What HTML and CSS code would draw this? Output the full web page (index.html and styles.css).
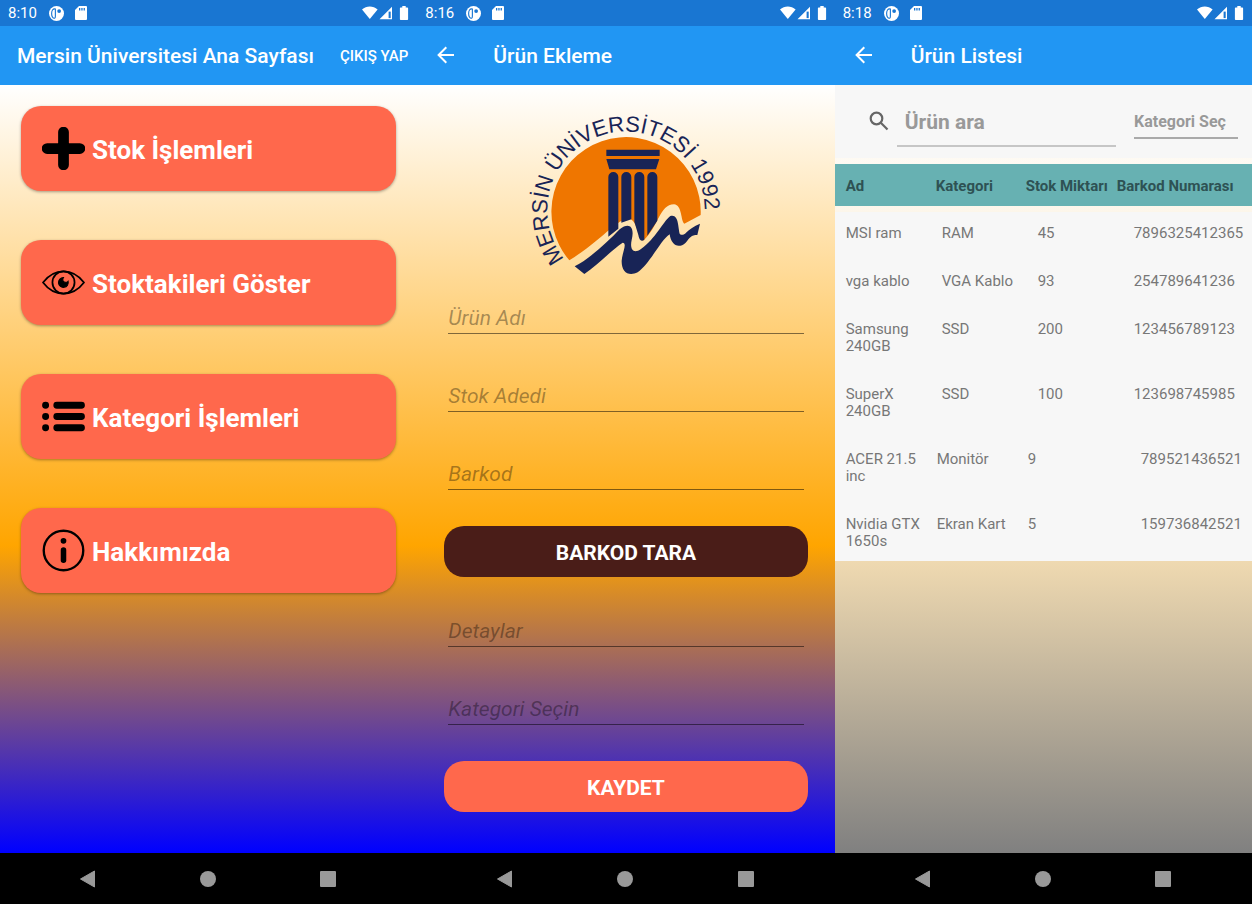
FILE: index.html
```html
<!DOCTYPE html>
<html lang="tr">
<head>
<meta charset="utf-8">
<title>Mersin Üniversitesi Stok</title>
<link rel="stylesheet" href="styles.css">
</head>
<body>
<svg class="defs" aria-hidden="true">
  <symbol id="app" viewBox="0 0 16 16"><circle cx="8" cy="8" r="8" fill="#fff"/><path d="M6.800 3.200C4 2.600 2.800 5 2.800 8S4 13.400 6 13.100C6.700 12.900 6.800 12.200 6.800 11z" fill="none" stroke="#1976d2" stroke-width="1.200"/><circle cx="10.800" cy="5.400" r="2" fill="#1976d2"/></symbol>
  <symbol id="sd" viewBox="0 0 12 14"><path d="M4 0h7a1 1 0 0 1 1 1v12a1 1 0 0 1-1 1H1a1 1 0 0 1-1-1V4z" fill="#fff"/><path d="M4 2h1.300v2.500H4zM6.300 2h1.300v2.500H6.300zM8.600 2h1.300v2.500H8.600z" fill="#1976d2"/></symbol>
  <symbol id="signals" viewBox="0 0 48 14"><path d="M1 3.500C5.400-.5 12.200-.5 16.600 3.500L8.800 13z" fill="#fff"/><path d="M18.500 13.300 31 .800v12.500z" fill="#fff"/><path d="M27.600 5.600h2.100v6.500h-2.100z" fill="#1976d2"/><path d="M41.300 0h3.400v1.400h1.600a.8.8 0 0 1 .8.8v11a.8.8 0 0 1-.8.800h-6.600a.8.8 0 0 1-.8-.8v-11a.8.8 0 0 1 .8-.8h1.600z" fill="#fff"/></symbol>
  <symbol id="back" viewBox="0 0 18 18"><path d="M17 9H2M9.300 1.300 1.600 9l7.700 7.700" fill="none" stroke="#fff" stroke-width="2"/></symbol>
  <symbol id="nav-back" viewBox="0 0 18 18"><path d="M15.500 1v16L1.500 9z" fill="#999" stroke="#999" stroke-linejoin="round"/></symbol>
  <symbol id="nav-home" viewBox="0 0 18 18"><circle cx="9" cy="9" r="8" fill="#999"/></symbol>
  <symbol id="nav-recent" viewBox="0 0 18 18"><rect x="1" y="1" width="16" height="16" rx="1" fill="#999"/></symbol>
</svg>
<main class="screens">
  <section class="phone">
    <div class="status"><span>8:10</span><svg class="app"><use href="#app"/></svg><svg class="sd"><use href="#sd"/></svg><svg class="signals"><use href="#signals"/></svg></div>
    <header class="bar"><h1>Mersin Üniversitesi Ana Sayfası</h1><button class="logout">ÇIKIŞ YAP</button></header>
    <div class="content home">
      <button class="tile"><svg viewBox="0 0 42 42"><path d="M21 5v32M5 21h32" stroke="#000" stroke-width="10.500" stroke-linecap="round"/></svg><span>Stok İşlemleri</span></button>
      <button class="tile"><svg viewBox="0 0 42 42" fill="none" stroke="#000" stroke-width="1.700"><path d="M1 21C12 6.500 30 6.500 41 21 30 35.500 12 35.500 1 21z"/><circle cx="21" cy="21" r="10.800"/><path d="M21 16.200a4.800 4.800 0 1 0 4.500 3.500c-1 1.600-4.800 1.500-5.200-1 0-1 .2-1.700.7-2.500z" fill="#000" stroke-width="1"/></svg><span>Stoktakileri Göster</span></button>
      <button class="tile"><svg viewBox="0 0 42 42" stroke="#000" stroke-width="6.800" stroke-linecap="round"><path d="M3.500 10h.01M3.500 21h.01M3.500 32h.01M14.500 10h24M14.500 21h24M14.500 32h24"/></svg><span>Kategori İşlemleri</span></button>
      <button class="tile"><svg viewBox="0 0 42 42"><circle cx="21" cy="21" r="19.300" fill="none" stroke="#000" stroke-width="2.300"/><circle cx="21" cy="11.500" r="2.800"/><path d="M21 20.500v10" stroke="#000" stroke-width="5.400" stroke-linecap="round"/></svg><span>Hakkımızda</span></button>
    </div>
    <nav class="nav"><button aria-label="Geri"><svg><use href="#nav-back"/></svg></button><button aria-label="Ana ekran"><svg><use href="#nav-home"/></svg></button><button aria-label="Son uygulamalar"><svg><use href="#nav-recent"/></svg></button></nav>
  </section>

  <section class="phone">
    <div class="status"><span>8:16</span><svg class="app"><use href="#app"/></svg><svg class="sd"><use href="#sd"/></svg><svg class="signals"><use href="#signals"/></svg></div>
    <header class="bar"><button class="up" aria-label="Geri dön"><svg><use href="#back"/></svg></button><h1>Ürün Ekleme</h1></header>
    <form class="content add">
      <svg class="logo" viewBox="-5 0 645 555" role="img" aria-label="Mersin Üniversitesi 1992">
        <defs><path id="ring" d="M134 477A236 236 0 1 1 541 411"/></defs>
        <path d="M149 481A224 224 0 1 1 543 345L494 371C483 364 488 315 463 313C420 313 415 382 372 421C356 425 356 365 330 356C292 354 260 410 149 481z" fill="#ef7600"/>
        <g fill="#182456"><path d="M260 149h160v19H260zM260 177h159l-10 31H269z"/><path d="M266 410V231a15 15 0 0 1 30 0v155zM305 368V231a15 15 0 0 1 30 0v127zM344 365V231a15 15 0 0 1 30 0v188q-14 10-18-14zM383 407V231a15 15 0 0 1 30 0v131z"/>
        <path d="M165 499C205 480 265 425 300 388C329 365 346 381 336 420C329 454 345 461 364 447C409 415 429 366 452 348C477 340 475 381 480 401C485 407 493 405 499 398C510 387 522 379 541 371L533 405C514 405 511 413 498 428C475 449 454 433 450 403C424 419 390 492 354 517C326 530 305 516 306 482C307 460 324 429 309 428C280 446 235 495 194 522z"/></g>
        <text class="ring-text"><textPath href="#ring">MERSİN ÜNİVERSİTESİ 1992</textPath></text>
      </svg>
      <input class="field" aria-label="Ürün Adı" placeholder="Ürün Adı">
      <input class="field" aria-label="Stok Adedi" placeholder="Stok Adedi">
      <input class="field" aria-label="Barkod" placeholder="Barkod">
      <button type="button" class="action scan">BARKOD TARA</button>
      <input class="field" aria-label="Detaylar" placeholder="Detaylar">
      <input class="field" aria-label="Kategori Seçin" placeholder="Kategori Seçin">
      <button type="button" class="action save">KAYDET</button>
    </form>
    <nav class="nav"><button aria-label="Geri"><svg><use href="#nav-back"/></svg></button><button aria-label="Ana ekran"><svg><use href="#nav-home"/></svg></button><button aria-label="Son uygulamalar"><svg><use href="#nav-recent"/></svg></button></nav>
  </section>

  <section class="phone">
    <div class="status"><span>8:18</span><svg class="app"><use href="#app"/></svg><svg class="sd"><use href="#sd"/></svg><svg class="signals"><use href="#signals"/></svg></div>
    <header class="bar"><button class="up" aria-label="Geri dön"><svg><use href="#back"/></svg></button><h1>Ürün Listesi</h1></header>
    <div class="content list">
      <div class="search">
        <svg viewBox="0 0 20 20" fill="none" stroke="#666" stroke-width="2.200"><circle cx="7.500" cy="7.500" r="5.800"/><path d="m11.800 11.800 6.700 6.700"/></svg>
        <input class="query" aria-label="Ürün ara" placeholder="Ürün ara">
        <input class="category" aria-label="Kategori Seç" placeholder="Kategori Seç">
      </div>
      <table class="products">
        <thead><tr><th>Ad</th><th>Kategori</th><th>Stok Miktarı</th><th>Barkod Numarası</th></tr></thead>
        <tbody>
          <tr class="wide"><td>MSI ram</td><td>RAM</td><td>45</td><td>7896325412365</td></tr>
          <tr class="wide"><td>vga kablo</td><td>VGA Kablo</td><td>93</td><td>254789641236</td></tr>
          <tr class="wide"><td>Samsung 240GB</td><td>SSD</td><td>200</td><td>123456789123</td></tr>
          <tr class="wide"><td>SuperX 240GB</td><td>SSD</td><td>100</td><td>123698745985</td></tr>
          <tr class="narrow"><td>ACER 21.5 inc</td><td>Monitör</td><td>9</td><td>789521436521</td></tr>
          <tr class="narrow"><td>Nvidia GTX 1650s</td><td>Ekran Kart</td><td>5</td><td>159736842521</td></tr>
        </tbody>
      </table>
    </div>
    <nav class="nav"><button aria-label="Geri"><svg><use href="#nav-back"/></svg></button><button aria-label="Ana ekran"><svg><use href="#nav-home"/></svg></button><button aria-label="Son uygulamalar"><svg><use href="#nav-recent"/></svg></button></nav>
  </section>
</main>
</body>
</html>
```
FILE: styles.css
```css
* { box-sizing: border-box; }
body { margin: 0; font-family: Roboto, "Noto Sans", sans-serif; }
button, input { font: inherit; color: inherit; border: 0; padding: 0; margin: 0; background: none; border-radius: 0; outline: 0; }
button { cursor: pointer; }
.defs { display: none; }
.screens { display: grid; grid-template-columns: repeat(3, 1fr); min-height: 100vh; }
.phone { display: flex; flex-direction: column; min-width: 0; }

.status { height: 26px; display: flex; align-items: center; padding: 0 8px; background: #1976d2; color: #fff; font-size: 15px; }
.status span { width: 41px; }
.app { width: 15px; height: 15px; }
.sd { width: 12px; height: 14px; margin-left: 11px; }
.signals { width: 48px; height: 14px; margin-left: auto; }

.bar { height: 59px; display: flex; align-items: center; padding: 0 9px 2px 17px; background: #2196f3; color: #fff; }
.bar h1 { margin: 0; padding-top: 3px; font-size: 21px; font-weight: 500; white-space: nowrap; }
.logout { margin-left: auto; padding-top: 3px; font-size: 15px; font-weight: 500; white-space: nowrap; }
.up { display: flex; align-items: center; width: 59px; height: 40px; padding-left: 3px; }
.up svg { width: 18px; height: 18px; }

.content { flex: 1; background: linear-gradient(#fff, #ffa500 60%, #00f); }
.home { display: flex; flex-direction: column; gap: 49px; padding: 21px; }
.tile { height: 85px; display: flex; align-items: center; gap: 7px; padding: 0 21px; border-radius: 20px; background: #ff684c; color: #fff; font-size: 26px; font-weight: 700; white-space: nowrap; box-shadow: 0 1px 3px rgba(0, 0, 0, .35); }
.tile svg { width: 43px; height: 43px; }
.tile span { padding-top: 2px; }

.add { display: flex; flex-direction: column; padding: 15px 27px 41px; }
.logo { width: 215px; height: 185px; align-self: center; }
.ring-text { font: 66px "Liberation Sans", Arial, sans-serif; fill: #182456; }
.field { height: 34px; margin: 0 4px 44px; padding-top: 2px; border-bottom: 1px solid rgba(0, 0, 0, .5); font-size: 21px; font-style: italic; }
.field::placeholder { color: rgba(0, 0, 0, .36); opacity: 1; }
.logo + .field { margin-top: 15px; }
.action { height: 51px; padding-top: 2px; border-radius: 20px; color: #fff; font-size: 21px; font-weight: 700; }
.scan { margin: -8px 0 36px; background: #4a1d18; }
.save { margin-top: -8px; background: #ff684c; }

.list { background: linear-gradient(#fff, #f5deb3 60%, #808080); color: #777; }
.search { height: 73px; display: flex; align-items: flex-start; padding: 0 14px 0 34px; background: #f7f7f7; }
.search svg { width: 20px; height: 20px; margin: 26px 8px 0 0; }
.query { flex: 1; min-width: 0; height: 62px; padding: 14px 8px 0; border-bottom: 2px solid #c6c6c6; font-size: 21px; font-weight: 700; }
.category { width: 104px; height: 54px; margin-left: 18px; padding-top: 21px; border-bottom: 2px solid #aaa; font-size: 16px; font-weight: 700; }
.query::placeholder, .category::placeholder { color: #999; opacity: 1; }
.products { display: block; margin-top: 6px; font-size: 15px; line-height: 17px; }
.products thead, .products tbody { display: block; }
.products tr { display: grid; }
.products th, .products td { padding: 0; text-align: left; }
.products thead tr { grid-template-columns: 90px 90px 91px 1fr; align-items: center; height: 42px; padding: 2px 0 0 11px; background: #67b1b2; color: #2e5254; white-space: nowrap; }
.products tbody { margin-top: 6px; background: #f7f7f7; }
.products tbody tr { padding: 13px 0 18px 11px; }
.products tbody tr:last-child { padding-bottom: 11px; }
.products .wide { grid-template-columns: 96px 96px 96px 1fr; }
.products .narrow { grid-template-columns: 91px 91px 113px 1fr; }
.products td:first-child { padding-right: 16px; }

.nav { height: 51px; display: flex; justify-content: space-between; align-items: center; padding: 0 80px 0 79px; background: #000; }
.nav button, .nav svg { display: block; width: 18px; height: 18px; }
```
